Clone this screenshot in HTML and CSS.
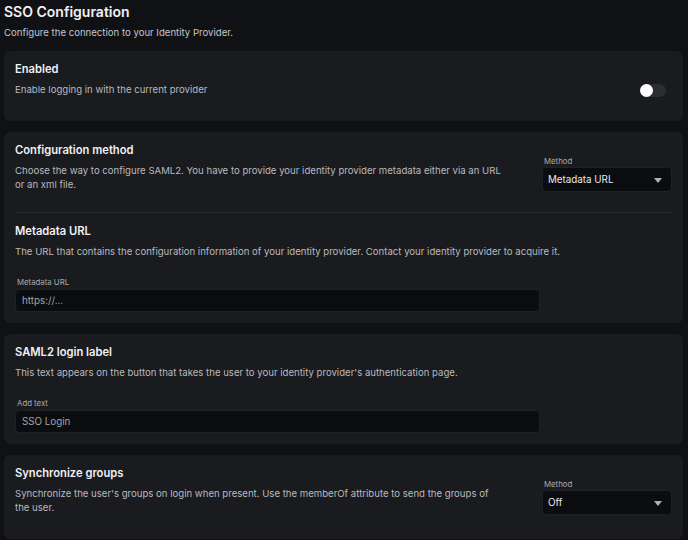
FILE: index.html
```html
<!DOCTYPE html>
<html lang="en">
<head>
  <meta charset="UTF-8" />
  <title>SSO Configuration</title>
  <link rel="stylesheet" href="styles.css">
</head>
<body>

<div class="page">
  <h1>SSO Configuration</h1>
  <p class="page-sub">Configure the connection to your Identity Provider.</p>

  <div class="card">
    <div class="section row">
      <div class="text">
        <h3>Enabled</h3>
        <p class="desc">Enable logging in with the current provider</p>
      </div>
      <div class="toggle"><span class="knob"></span></div>
    </div>
  </div>

  <div class="card">
    <div class="section row first">
      <div class="text">
        <h3>Configuration method</h3>
        <p class="desc">Choose the way to configure SAML2. You have to provide your identity provider metadata either via an URL or an xml file.</p>
      </div>
      <div class="field side">
        <label>Method</label>
        <div class="select">Metadata URL <span class="caret"></span></div>
      </div>
    </div>
    <div class="section divided">
      <h3>Metadata URL</h3>
      <p class="desc">The URL that contains the configuration information of your identity provider. Contact your identity provider to acquire it.</p>
      <div class="field wide">
        <label for="meta">Metadata URL</label>
        <input type="text" id="meta" placeholder="https://...">
      </div>
    </div>
  </div>

  <div class="card">
    <div class="section">
      <h3>SAML2 login label</h3>
      <p class="desc">This text appears on the button that takes the user to your identity provider's authentication page.</p>
      <div class="field wide">
        <label for="label">Add text</label>
        <input type="text" id="label" placeholder="SSO Login">
      </div>
    </div>
  </div>

  <div class="card">
    <div class="section row">
      <div class="text">
        <h3>Synchronize groups</h3>
        <p class="desc">Synchronize the user's groups on login when present. Use the memberOf attribute to send the groups of the user.</p>
      </div>
      <div class="field side">
        <label>Method</label>
        <div class="select">Off <span class="caret"></span></div>
      </div>
    </div>
  </div>
</div>

</body>
</html>
```

FILE: styles.css
```css
body {
  margin: 0;
  background: #101115;
  color: #f1f1f3;
  font-family: Inter, "Open Sans", sans-serif;
}

.page {
  padding: 3px 5px 20px 4px;
}

h1 {
  margin: 0;
  font-size: 14px;
  line-height: 18px;
  font-weight: 600;
}

.page-sub {
  margin: 5px 0 11px;
  font-size: 9.6px;
  line-height: 14px;
  color: #c4c5c9;
}

.card {
  background: #1a1b1f;
  border-radius: 6px;
  margin-bottom: 11px;
  padding: 0 11px;
}

.section {
  padding: 10px 0 11px;
}

.section.divided {
  border-top: 1px solid #2a2b30;
  padding-top: 10px;
}

.row {
  display: flex;
  align-items: flex-end;
  padding-bottom: 24px;
}

.row.first {
  padding-bottom: 20px;
}

.row .text {
  flex: 1;
  padding-right: 37px;
}

h3 {
  margin: 0 0 6px;
  font-size: 11.2px;
  line-height: 16px;
  font-weight: 600;
}

.desc {
  margin: 0 0 18px;
  font-size: 9.6px;
  line-height: 14px;
  color: #b9babe;
}

.row .desc {
  margin-bottom: 0;
}

.field label {
  display: block;
  font-size: 7.8px;
  line-height: 10px;
  color: #a9aaae;
  margin: 0 0 1px 2px;
}

.field.side {
  width: 130px;
  flex-shrink: 0;
}

.field.wide {
  width: 525px;
}

.select,
.field input {
  box-sizing: border-box;
  width: 100%;
  background: #0b0c10;
  border: 1px solid #202126;
  border-radius: 4px;
  color: #e8e8ea;
  font-family: inherit;
  font-size: 9.8px;
}

.select {
  height: 25px;
  line-height: 23px;
  padding: 0 5px;
  position: relative;
}

.caret {
  position: absolute;
  right: 9px;
  top: 10px;
  border-left: 4px solid transparent;
  border-right: 4px solid transparent;
  border-top: 5px solid #b0b1b5;
}

.field input {
  height: 23px;
  padding: 0 6px;
  outline: none;
  margin: 0;
}

.field input::placeholder {
  color: #a4a5a9;
}

.toggle {
  width: 26px;
  height: 13px;
  border-radius: 7px;
  background: #2c2d32;
  margin: 0 6px 0 0;
  position: relative;
}

.knob {
  position: absolute;
  left: 0;
  top: 0;
  width: 13px;
  height: 13px;
  border-radius: 50%;
  background: #ffffff;
}
```
